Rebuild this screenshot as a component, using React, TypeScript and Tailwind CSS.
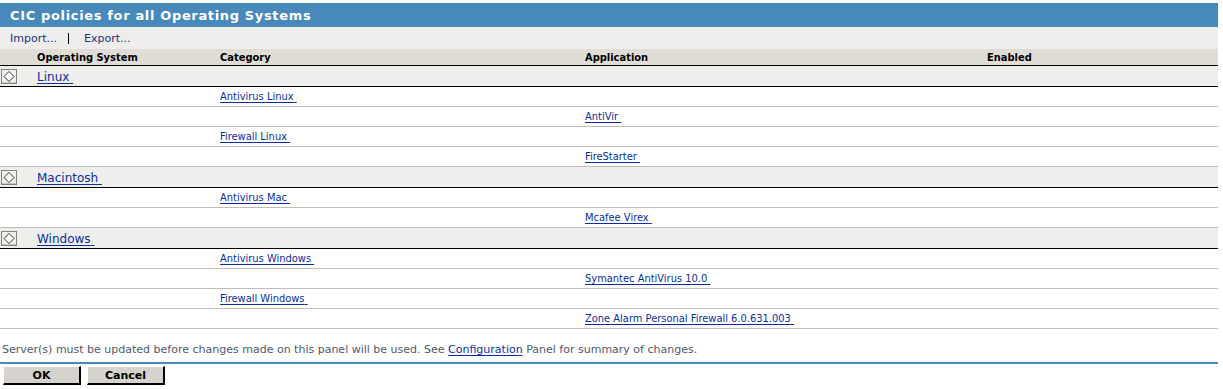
import React from "react";

type Row =
  | { kind: "os"; name: string }
  | { kind: "cat"; name: string }
  | { kind: "app"; name: string };

const rows: Row[] = [
  { kind: "os", name: "Linux" },
  { kind: "cat", name: "Antivirus Linux" },
  { kind: "app", name: "AntiVir" },
  { kind: "cat", name: "Firewall Linux" },
  { kind: "app", name: "FireStarter" },
  { kind: "os", name: "Macintosh" },
  { kind: "cat", name: "Antivirus Mac" },
  { kind: "app", name: "Mcafee Virex" },
  { kind: "os", name: "Windows" },
  { kind: "cat", name: "Antivirus Windows" },
  { kind: "app", name: "Symantec AntiVirus 10.0" },
  { kind: "cat", name: "Firewall Windows" },
  { kind: "app", name: "Zone Alarm Personal Firewall 6.0.631.003" },
];

const font = { fontFamily: '"DejaVu Sans", Verdana, sans-serif' };
const condensed = { fontFamily: '"DejaVu Sans Condensed", "DejaVu Sans", sans-serif' };

function Toggle() {
  return (
    <svg width="16" height="15" viewBox="0 0 16 15" className="block">
      <rect x="0.5" y="0.5" width="15" height="14" fill="#f1f0ec" stroke="#85837d" />
      <line x1="1" y1="13.5" x2="15" y2="13.5" stroke="#c9c7c0" />
      <path d="M8 2.5 L13 7.5 L8 12.5 L3 7.5 Z" fill="#ffffff" stroke="#333333" strokeWidth="1" />
    </svg>
  );
}

function RowLink({ text, wide }: { text: string; wide?: boolean }) {
  return (
    <a
      href="#"
      className="text-[#0a2f9c] underline underline-offset-2 decoration-1"
      style={wide ? font : condensed}
    >
      {text.replace(/ /g, "\u00a0")}&nbsp;
    </a>
  );
}

const cols = "grid grid-cols-[37px_183px_365px_402px_1fr]";

export default function App() {
  return (
    <div className="w-[1223px] h-[389px] bg-white text-[11px] leading-none" style={font}>
      <div className="w-[1218px] pt-[3px]">
        {/* title */}
        <div className="h-[24px] bg-[#4689ba] flex items-center pl-[10px]">
          <span className="text-white font-bold text-[13px] tracking-[0.65px]">
            CIC policies for all Operating Systems
          </span>
        </div>

        {/* toolbar */}
        <div className="h-[22px] bg-[#eeedeb] flex items-center pl-[10px] text-[#19367f]">
          <a href="#">Import...</a>
          <span className="ml-[11px] mr-[15px] mt-[1px] w-px h-[11px] bg-black" />
          <a href="#">Export...</a>
        </div>

        {/* header */}
        <div
          className={`${cols} h-[17px] bg-[#dfddd6] border-b border-black font-bold text-black items-center`}
          style={condensed}
        >
          <div />
          <div>Operating System</div>
          <div>Category</div>
          <div>Application</div>
          <div>Enabled</div>
        </div>

        {rows.map((r, i) =>
          r.kind === "os" ? (
            <div key={i} className={`${cols} h-[21px] bg-[#eeeeec] border-b border-black items-center`}>
              <div className="pl-[1px] pt-[1px]">
                <Toggle />
              </div>
              <div className="text-[12px] pt-[2px]">
                <RowLink text={r.name} wide />
              </div>
              <div />
              <div />
              <div />
            </div>
          ) : (
            <div key={i} className={`${cols} h-[20px] bg-white border-b border-[#bfbdb6] items-center`}>
              <div />
              <div />
              <div>{r.kind === "cat" && <RowLink text={r.name} />}</div>
              <div>{r.kind === "app" && <RowLink text={r.name} />}</div>
              <div />
            </div>
          )
        )}

        {/* message */}
        <div className="h-[33px] flex items-end pb-[7px] pl-[2px] text-[#4d5b6b] text-[11px]">
          Server(s) must be updated before changes made on this panel will be used. See&nbsp;
          <a href="#" className="text-[#0a2f9c] underline underline-offset-2">Configuration</a>
          &nbsp;Panel for summary of changes.
        </div>
        <div className="h-[2px] bg-[#4689ba]" />

        {/* buttons */}
        <div className="flex gap-[6px] pl-[3px] pt-[2px]">
          <button className="w-[78px] h-[19px] bg-[#d6d3ce] border-t border-l border-white border-r-2 border-b-2 border-r-black border-b-black font-bold text-[11px] text-black">
            OK
          </button>
          <button className="w-[78px] h-[19px] bg-[#d6d3ce] border-t border-l border-white border-r-2 border-b-2 border-r-black border-b-black font-bold text-[11px] text-black">
            Cancel
          </button>
        </div>
      </div>
    </div>
  );
}
